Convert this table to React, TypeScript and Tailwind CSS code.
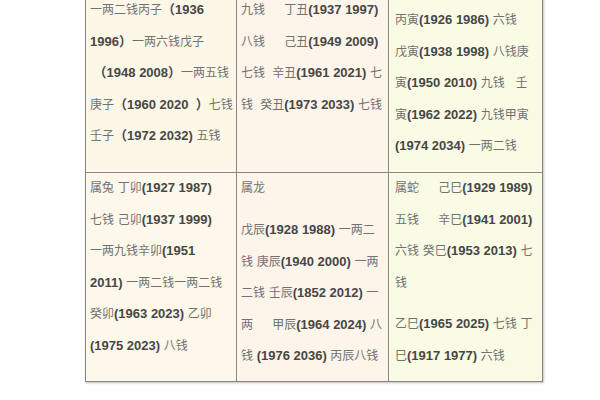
import React from 'react';

// one cell line: ascii runs (years, parens) are bold and darker, the CJK text is thin gray
const Line: React.FC<{ t: string; className?: string }> = ({ t, className = '' }) => {
  const parts = t.split(/([\x20-\x7e（）]+)/).filter(p => p !== '');
  return (
    <div className={`h-[31.5px] whitespace-pre leading-[28px] ${className}`}>
      {parts.map((p, i) =>
        /^[\x20-\x7e（）]+$/.test(p) ? (
          <span key={i} className="font-['Liberation_Sans','Noto_Sans_CJK_SC',sans-serif] text-[13px] font-bold text-[#474747]">
            {p}
          </span>
        ) : (
          <span key={i} className="text-[#727272]">{p}</span>
        )
      )}
    </div>
  );
};

export default function App() {
  return (
    <div className="w-[600px] h-[400px] overflow-hidden bg-white font-['Noto_Sans_CJK_SC',sans-serif] text-[12px]">
      <div className="ml-[85px] -mt-[6px] w-[458px] grid grid-cols-[151px_152px_153px] border border-[#85857d] shadow-[1px_1px_2px_rgba(0,0,0,0.25)]">
        {/* top row, cut off by the window */}
        <div className="h-[178px] bg-[#fcf7e7] border-r border-b border-[#8a8a82] pl-[4px]">
          <Line t="一两二钱丙子（1936" />
          <Line t="1996）一两六钱戊子" />
          <Line t=" （1948 2008）一两五钱" />
          <Line t="庚子（1960 2020  ）七钱" />
          <Line t="壬子（1972 2032) 五钱" />
        </div>
        <div className="h-[178px] bg-[#fdf4ea] border-r border-b border-[#8a8a82] pl-[4px]">
          <Line t="九钱　  丁丑(1937 1997)" />
          <Line t="八钱　  己丑(1949 2009)" />
          <Line t="七钱  辛丑(1961 2021) 七" />
          <Line t="钱  癸丑(1973 2033) 七钱" />
        </div>
        <div className="h-[178px] bg-[#f9fbe5] border-b border-[#8a8a82] pl-[6px] pt-[10px]">
          <Line t="丙寅(1926 1986) 六钱" />
          <Line t="戊寅(1938 1998) 八钱庚" />
          <Line t="寅(1950 2010) 九钱   壬" />
          <Line t="寅(1962 2022) 九钱甲寅" />
          <Line t="(1974 2034) 一两二钱" />
        </div>

        {/* second row */}
        <div className="h-[208px] bg-[#fdf8e9] border-r border-[#8a8a82] pl-[4px]">
          <Line t="属兔 丁卯(1927 1987)" />
          <Line t="七钱 己卯(1937 1999)" />
          <Line t="一两九钱辛卯(1951" />
          <Line t="2011) 一两二钱一两二钱" />
          <Line t="癸卯(1963 2023) 乙卯" />
          <Line t="(1975 2023) 八钱" />
        </div>
        <div className="h-[208px] bg-[#fdf4ea] border-r border-[#8a8a82] pl-[4px]">
          <Line t="属龙" className="mb-[10.5px]" />
          <Line t="戊辰(1928 1988) 一两二" />
          <Line t="钱 庚辰(1940 2000) 一两" />
          <Line t="二钱 壬辰(1852 2012) 一" />
          <Line t="两  　甲辰(1964 2024) 八" />
          <Line t="钱 (1976 2036) 丙辰八钱" />
        </div>
        <div className="h-[208px] bg-[#f9fbe5] pl-[6px]">
          <Line t="属蛇　  己巳(1929 1989)" />
          <Line t="五钱　  辛巳(1941 2001)" />
          <Line t="六钱 癸巳(1953 2013) 七" />
          <Line t="钱" />
          <Line t="乙巳(1965 2025) 七钱 丁" className="mt-[10px]" />
          <Line t="巳(1917 1977) 六钱" />
        </div>
      </div>
    </div>
  );
}
